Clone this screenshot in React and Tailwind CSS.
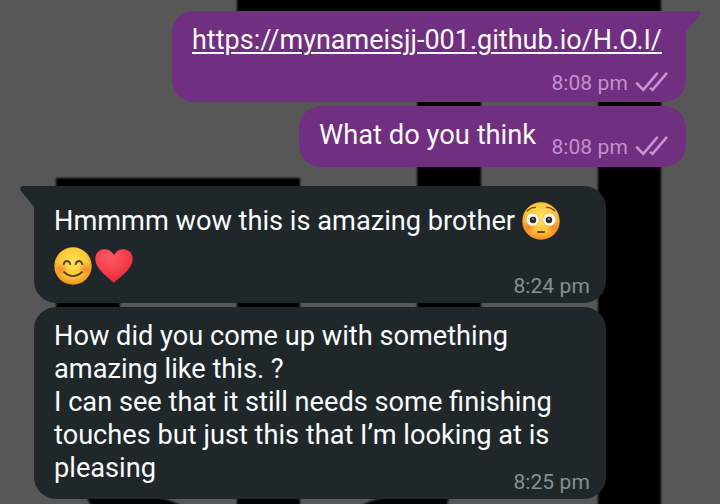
import React from "react";

function Wallpaper() {
  return (
    <svg className="absolute inset-0 h-[504px] w-[720px]" viewBox="0 0 720 504" aria-hidden="true">
      <defs>
        <filter id="soft" x="-5%" y="-5%" width="110%" height="110%">
          <feGaussianBlur stdDeviation="1" />
        </filter>
      </defs>
      <g filter="url(#soft)" fill="#000">
        <path d="M237-10H661V60H237Z" />
        <path d="M417 20H481V400H417Z" />
        <path d="M598 20H661V520H598Z" />
        <path d="M56 178H300V240H56Z" />
        <path d="M56 230H120V400H56Z" />
        <path d="M237 230H300V520H237Z" />
        <path d="M84 485L88 500L94 512H190Q177 501 160 498V485Z" />
        <path d="M452 485L448 501L445 512H353Q365 501 382 498V485Z" />
      </g>
    </svg>
  );
}

function Ticks() {
  return (
    <svg className="relative -top-px h-[22px] w-[34px]" viewBox="0 0 34 22" fill="none" stroke="#c793d0" strokeWidth="2.6" strokeLinecap="round" aria-label="Delivered">
      <path d="M2 12.5L8.3 18.8L22 2.7" />
      <path d="M15.8 17.5L17.6 18.8L31.3 2.7" />
    </svg>
  );
}

function FaceGradients() {
  return (
    <svg className="absolute h-0 w-0" aria-hidden="true">
      <defs>
        <radialGradient id="face" cx=".5" cy=".4" r=".62">
          <stop offset="0" stopColor="#ffe45c" />
          <stop offset=".6" stopColor="#fdc936" />
          <stop offset="1" stopColor="#ee8a20" />
        </radialGradient>
        <radialGradient id="blush">
          <stop offset="0" stopColor="#f5722c" stopOpacity=".75" />
          <stop offset="1" stopColor="#f5722c" stopOpacity="0" />
        </radialGradient>
        <radialGradient id="heart" cx=".4" cy=".25" r=".8">
          <stop offset="0" stopColor="#ff5963" />
          <stop offset=".6" stopColor="#f23c47" />
          <stop offset="1" stopColor="#d92736" />
        </radialGradient>
      </defs>
    </svg>
  );
}

function Flushed() {
  return (
    <svg className="h-[38px] w-[38px]" viewBox="0 0 38 38" role="img" aria-label="😳">
      <circle cx="19" cy="19" r="18.7" fill="url(#face)" />
      <circle cx="7" cy="25" r="7" fill="url(#blush)" />
      <circle cx="31" cy="25" r="7" fill="url(#blush)" />
      <circle cx="10.7" cy="17.6" r="6.6" fill="#fff8ed" stroke="#d99a43" strokeWidth=".5" />
      <circle cx="27.3" cy="17.6" r="6.6" fill="#fff8ed" stroke="#d99a43" strokeWidth=".5" />
      <circle cx="11" cy="18" r="3.2" fill="#302b2a" />
      <circle cx="27" cy="18" r="3.2" fill="#302b2a" />
      <circle cx="11" cy="17" r=".9" fill="#a9a4a0" />
      <circle cx="27" cy="17" r=".9" fill="#a9a4a0" />
      <path d="M5.5 8.8Q8.5 5.4 13.5 5.3M24.5 5.3Q29.5 5.4 32.5 8.8" fill="none" stroke="#70440c" strokeWidth="1.3" strokeLinecap="round" />
      <path d="M16 30H22" stroke="#70440c" strokeWidth="2" strokeLinecap="round" />
    </svg>
  );
}

function Smiling() {
  return (
    <svg className="h-[38px] w-[38px]" viewBox="0 0 38 38" role="img" aria-label="😊">
      <circle cx="19" cy="19" r="18.7" fill="url(#face)" />
      <circle cx="7" cy="22" r="7" fill="url(#blush)" />
      <circle cx="31" cy="22" r="7" fill="url(#blush)" />
      <g fill="none" stroke="#5c420e" strokeWidth="1.8" strokeLinecap="round">
        <path d="M9.7 17.2Q10.5 14 13 14T16.3 17.2" />
        <path d="M21.7 17.2Q22.5 14 25 14T28.3 17.2" />
        <path d="M10 25Q19 33.2 28 25" />
      </g>
    </svg>
  );
}

function Heart() {
  return (
    <svg className="h-[38px] w-[38px]" viewBox="0 0 38 38" role="img" aria-label="❤️">
      <path d="M19 36C16 32 1 23.5.3 12.5C0 6 4.4 2.2 9.7 2.2C14.2 2.2 17.5 5 19 8.2C20.5 5 23.8 2.2 28.3 2.2C33.6 2.2 38 6 37.7 12.5C37 23.5 22 32 19 36Z" fill="url(#heart)" />
    </svg>
  );
}

function Time({ children, sent }) {
  return (
    <div className={sent ? "flex h-6 items-center gap-[7px] text-[#c391cc]" : "flex h-6 items-center text-[#859095]"}>
      <span className="text-[21px] leading-6 tracking-[0.1px] whitespace-nowrap">{children}</span>
      {sent && <Ticks />}
    </div>
  );
}

function Tail({ side }) {
  return side === "right" ? (
    <svg className="absolute top-0 -right-[15px] h-[24px] w-[38px]" viewBox="0 0 38 24" aria-hidden="true">
      <path d="M0 0H34.5Q39 1 36 5L23 20.5V24H0Z" fill="#702f81" />
    </svg>
  ) : (
    <svg className="absolute top-0 -left-[14px] h-[24px] w-[38px]" viewBox="0 0 38 24" aria-hidden="true">
      <path d="M38 0H2.5Q-1.5 1 1 5L14 21V24H38Z" fill="#20272b" />
    </svg>
  );
}

export default function App() {
  return (
    <div className="relative h-[504px] w-[720px] overflow-hidden bg-[#575757] font-[Roboto,sans-serif] text-[27.2px] leading-[33px] text-[#fbfcfd]">
      <Wallpaper />
      <FaceGradients />
      <main className="relative flex flex-col pt-[11px] pr-[34px] pl-[34px]">
        <section className="flex flex-col items-end gap-1">
          <article className="relative flex h-[91px] w-[514px] flex-col rounded-[22px] bg-[#702f81] px-5 pt-[13px]">
            <Tail side="right" />
            <a className="relative text-[27px] whitespace-nowrap underline decoration-[1.5px] underline-offset-[2.5px]">https://mynameisjj-001.github.io/H.O.I/</a>
            <div className="mt-[14px] -mr-[3px] flex justify-end"><Time sent>8:08 pm</Time></div>
          </article>
          <article className="flex h-[61px] w-[387px] justify-between rounded-[22px] bg-[#702f81] pt-[13px] pr-[17px] pl-5">
            <p className="text-[27.3px] whitespace-nowrap">What do you think</p>
            <div className="mt-4"><Time sent>8:08 pm</Time></div>
          </article>
        </section>
        <section className="mt-[19px] flex flex-col items-start gap-1">
          <article className="relative flex h-[117px] w-[572px] flex-col rounded-[22px] bg-[#20272b] pt-4 pr-4 pl-5">
            <Tail side="left" />
            <div className="relative flex h-[38px] items-center gap-[7px] whitespace-nowrap">
              <p>Hmmmm wow this is amazing brother</p>
              <Flushed />
            </div>
            <div className="mt-[7px] flex justify-between">
              <div className="flex gap-[3px]"><Smiling /><Heart /></div>
              <div className="mt-[27px] h-6"><Time>8:24 pm</Time></div>
            </div>
          </article>
          <article className="flex h-[192px] w-[572px] justify-between rounded-[22px] bg-[#20272b] pt-[13px] pr-4 pl-5">
            <p className="w-0 whitespace-nowrap">
              How did you come up with something<br />
              amazing like this. ?<br />
              I can see that it still needs some finishing<br />
              touches but just this that I’m looking at is<br />
              pleasing
            </p>
            <div className="mt-[150px]"><Time>8:25 pm</Time></div>
          </article>
        </section>
      </main>
    </div>
  );
}
